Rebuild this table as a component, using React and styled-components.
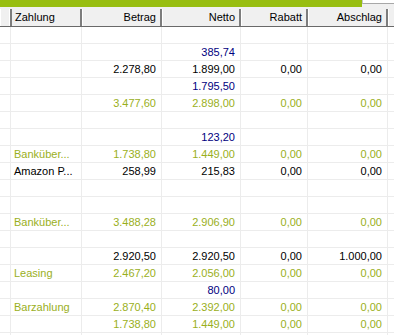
import React from 'react';
import styled, { createGlobalStyle } from 'styled-components';

const GlobalStyle = createGlobalStyle`
  html, body {
    margin: 0;
    padding: 0;
    background: #ffffff;
  }
  body {
    font-family: "Liberation Sans", Arial, sans-serif;
    font-size: 11px;
    color: #000;
  }
`;

const COLS = '9px 73px 80px 79px 67px 80px 1fr';

const Frame = styled.div`
  width: 394px;
  height: 335px;
  overflow: hidden;
  background: #fff;
`;

const TopStrip = styled.div`
  display: flex;
  height: 7px;
  background: #f0f0f0;
`;

const GreenBar = styled.div`
  width: 362px;
  background: #98be10;
`;

const TopField = styled.div`
  flex: 1;
  height: 3px;
  background: #fff;
  border-left: 1px solid #c8c8c8;
  border-bottom: 1px solid #a8a8a8;
`;

const HeaderRow = styled.div`
  display: grid;
  grid-template-columns: ${COLS};
  height: 20px;
  background: #f0f0f0;
  padding-top: 2px;
  box-sizing: border-box;
  border-bottom: 1px solid #696969;
`;

const HeaderCell = styled.div`
  box-sizing: border-box;
  border-left: 1px solid #ffffff;
  border-right: 2px solid #7d7d7d;
  padding: 0 4px 0 5px;
  line-height: 16px;
  text-align: ${p => p.$align || 'right'};
  white-space: nowrap;
  overflow: hidden;
`;

const Body = styled.div`
  display: flex;
  flex-direction: column;
`;

const Row = styled.div`
  display: grid;
  grid-template-columns: ${COLS};
  height: 17px;
  box-sizing: border-box;
  border-bottom: 1px solid #ececec;
`;

const toneColor = {
  black: '#000000',
  blue: '#000080',
  green: '#9aaf1c',
};

const Cell = styled.div`
  box-sizing: border-box;
  border-right: 1px solid #ececec;
  padding: 0 5px 0 5px;
  line-height: 16px;
  text-align: ${p => p.$align || 'right'};
  color: ${p => toneColor[p.$tone] || '#000'};
  white-space: nowrap;
  overflow: hidden;
`;

const rows = [
  { tone: 'black', v: [] },
  { tone: 'blue', v: ['', '', '385,74'] },
  { tone: 'black', v: ['', '2.278,80', '1.899,00', '0,00', '0,00'] },
  { tone: 'blue', v: ['', '', '1.795,50'] },
  { tone: 'green', v: ['', '3.477,60', '2.898,00', '0,00', '0,00'] },
  { tone: 'black', v: [] },
  { tone: 'blue', v: ['', '', '123,20'] },
  { tone: 'green', v: ['Banküber...', '1.738,80', '1.449,00', '0,00', '0,00'] },
  { tone: 'black', v: ['Amazon P...', '258,99', '215,83', '0,00', '0,00'] },
  { tone: 'black', v: [] },
  { tone: 'black', v: [] },
  { tone: 'green', v: ['Banküber...', '3.488,28', '2.906,90', '0,00', '0,00'] },
  { tone: 'black', v: [] },
  { tone: 'black', v: ['', '2.920,50', '2.920,50', '0,00', '1.000,00'] },
  { tone: 'green', v: ['Leasing', '2.467,20', '2.056,00', '0,00', '0,00'] },
  { tone: 'blue', v: ['', '', '80,00'] },
  { tone: 'green', v: ['Barzahlung', '2.870,40', '2.392,00', '0,00', '0,00'] },
  { tone: 'green', v: ['', '1.738,80', '1.449,00', '0,00', '0,00'] },
  { tone: 'black', v: [] },
];

const headers = ['Zahlung', 'Betrag', 'Netto', 'Rabatt', 'Abschlag'];

export default function App() {
  return (
    <Frame>
      <GlobalStyle />
      <TopStrip>
        <GreenBar />
        <TopField />
      </TopStrip>
      <HeaderRow>
        <HeaderCell />
        {headers.map((h, i) => (
          <HeaderCell key={h} $align={i === 0 ? 'left' : 'right'}>{h}</HeaderCell>
        ))}
        <HeaderCell />
      </HeaderRow>
      <Body>
        {rows.map((r, idx) => (
          <Row key={idx}>
            <Cell />
            {[0, 1, 2, 3, 4].map(i => (
              <Cell key={i} $align={i === 0 ? 'left' : 'right'} $tone={r.tone}>
                {r.v[i] || ''}
              </Cell>
            ))}
            <Cell />
          </Row>
        ))}
      </Body>
    </Frame>
  );
}
